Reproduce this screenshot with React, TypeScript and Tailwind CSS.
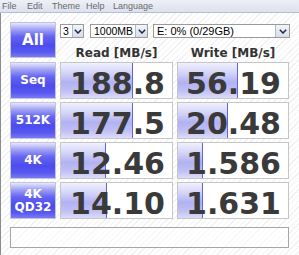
import React from "react";

const rows = [
  { label: ["Seq"], read: "188.8", write: "56.19", rw: 72, ww: 60 },
  { label: ["512K"], read: "177.5", write: "20.48", rw: 72, ww: 50 },
  { label: ["4K"], read: "12.46", write: "1.586", rw: 45, ww: 25 },
  { label: ["4K", "QD32"], read: "14.10", write: "1.631", rw: 46, ww: 25 },
];

const labelBox =
  "flex flex-col items-center justify-center border border-[#c4c4dc] bg-[linear-gradient(to_bottom,#e6e6fd_0%,#a4a4f6_18%,#6464f1_40%,#4c4cef_65%,#5858f0_85%,#7a7af3_100%)] text-white font-bold";

function Chevron() {
  return (
    <svg width="8" height="5" viewBox="0 0 8 5">
      <polyline points="0.8,0.8 4,4 7.2,0.8" fill="none" stroke="#1c2850" strokeWidth="1.5" />
    </svg>
  );
}

function Cell({ value, bar }: { value: string; bar: number }) {
  return (
    <div className="relative flex items-center justify-end border border-[#c6c6c6] bg-white pr-[7px] pt-[6px]">
      <div
        className="absolute left-0 top-0 bottom-0 border-r border-[#6464d4] bg-[linear-gradient(to_bottom,#f0f0fe_0%,#d2d2f8_30%,#b2b2f2_55%,#c0c0f5_80%,#dcdcfa_100%)]"
        style={{ width: bar }}
      />
      <span className="relative text-[30px] leading-[30px] font-bold text-[#3a3a3a]">{value}</span>
    </div>
  );
}

export default function App() {
  return (
    <div
      className="w-[299px] h-[255px] overflow-hidden flex flex-col bg-white"
      style={{ fontFamily: '"DejaVu Sans", Verdana, sans-serif' }}
    >
      {/* menu bar */}
      <div className="flex flex-col h-[13px] bg-[linear-gradient(to_bottom,#eef0f7,#dde1ee)] border-b border-[#b9bdcc]">
        <div className="flex h-px">
          <div className="w-[150px]" />
          <div className="flex-1 bg-[#4a4a4a]" />
        </div>
        <div
          className="flex pl-[2px] pt-[1px] text-[9px] leading-[11px] text-[#6a6a6a]"
          style={{ fontFamily: '"Liberation Sans", Arial, sans-serif' }}
        >
          <span className="w-[25px]">File</span>
          <span className="w-[25px]">Edit</span>
          <span className="w-[34px]">Theme</span>
          <span className="w-[27px]">Help</span>
          <span>Language</span>
        </div>
      </div>

      {/* body */}
      <div className="flex-1 flex flex-col border-l border-[#8c8c8c] pl-[9px] bg-[image:repeating-linear-gradient(135deg,#ffffff_0px,#ffffff_3px,#f1f1f1_3px,#f1f1f1_4px)]">
        {/* top section */}
        <div className="flex pt-[9px]">
          <div className={labelBox + " w-[46px] h-[36px] text-[15px] leading-[15px]"}>All</div>
          <div className="flex flex-col ml-[4px]">
            <div
              className="flex mt-[2px] h-[14px] text-[10.5px] text-black"
              style={{ fontFamily: '"Liberation Sans", Arial, sans-serif' }}
            >
              <div className="flex w-[24px] border border-[#9a9a9a] bg-white">
                <span className="flex-1 pl-[2px] leading-[12px]">3</span>
                <div className="w-[11px] flex items-center justify-center border-l border-[#b0b8c8] bg-[linear-gradient(to_bottom,#f2f4f8,#d8dee9)]">
                  <Chevron />
                </div>
              </div>
              <div className="flex w-[58px] ml-[6px] border border-[#9a9a9a] bg-white">
                <span className="flex-1 pl-[3px] leading-[12px]">1000MB</span>
                <div className="w-[12px] flex items-center justify-center border-l border-[#b0b8c8] bg-[linear-gradient(to_bottom,#f2f4f8,#d8dee9)]">
                  <Chevron />
                </div>
              </div>
              <div className="flex w-[137px] ml-[5px] border border-[#9a9a9a] bg-white">
                <span className="flex-1 pl-[3px] leading-[12px] text-[11px]">E: 0% (0/29GB)</span>
                <div className="w-[14px] flex items-center justify-center border-l border-[#b0b8c8] bg-[linear-gradient(to_bottom,#f2f4f8,#d8dee9)]">
                  <Chevron />
                </div>
              </div>
            </div>
            <div className="flex mt-[8px] h-[14px] text-[12px] leading-[14px] font-bold text-[#333333]">
              <div className="w-[113px] text-center">Read [MB/s]</div>
              <div className="w-[112px] ml-[4px] text-center">Write [MB/s]</div>
            </div>
          </div>
        </div>

        {/* result rows */}
        <div className="grid grid-cols-[46px_113px_112px] auto-rows-[37px] gap-x-[4px] gap-y-[3px] mt-[2px]">
          {rows.map((r) => (
            <React.Fragment key={r.label.join("")}>
              <div className={labelBox + " text-[12px] leading-[13px]"}>
                {r.label.map((l) => (
                  <span key={l}>{l}</span>
                ))}
              </div>
              <Cell value={r.read} bar={r.rw} />
              <Cell value={r.write} bar={r.ww} />
            </React.Fragment>
          ))}
        </div>

        {/* status */}
        <div className="mt-[8px] w-[279px] h-[21px] border border-[#a6a6a6] bg-white/50" />
      </div>
    </div>
  );
}
